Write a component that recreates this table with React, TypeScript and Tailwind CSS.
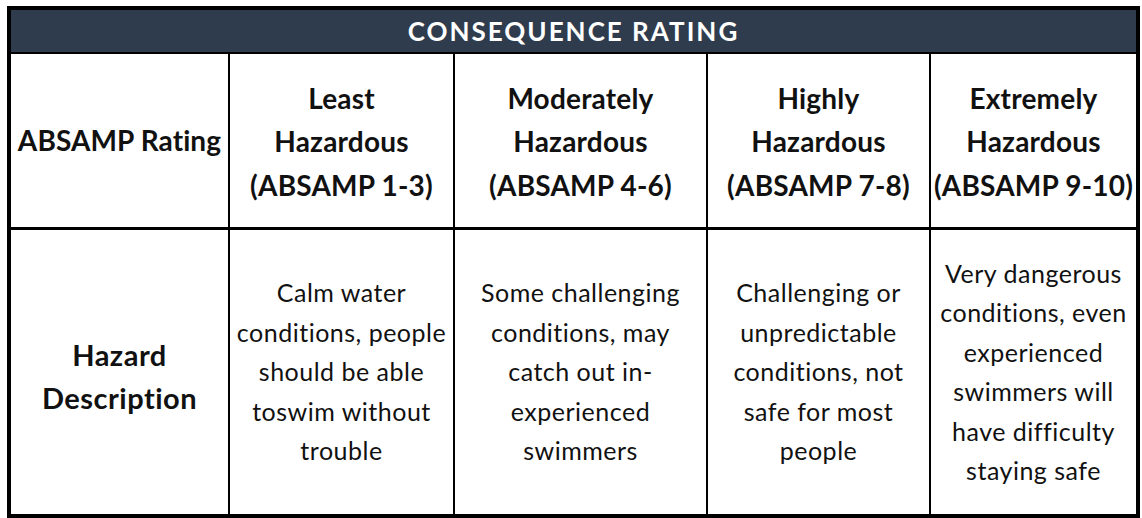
const levels = [
  { title: ["Least", "Hazardous", "(ABSAMP 1-3)"], desc: ["Calm water", "conditions, people", "should be able", "toswim without", "trouble"] },
  { title: ["Moderately", "Hazardous", "(ABSAMP 4-6)"], desc: ["Some challenging", "conditions, may", "catch out in-", "experienced", "swimmers"] },
  { title: ["Highly", "Hazardous", "(ABSAMP 7-8)"], desc: ["Challenging or", "unpredictable", "conditions, not", "safe for most", "people"] },
  { title: ["Extremely", "Hazardous", "(ABSAMP 9-10)"], desc: ["Very dangerous", "conditions, even", "experienced", "swimmers will", "have difficulty", "staying safe"] },
];

function Lines({ lines }: { lines: string[] }) {
  return (
    <div className="flex flex-col items-center">
      {lines.map((l) => (
        <span key={l} className="whitespace-nowrap">{l}</span>
      ))}
    </div>
  );
}

export default function App() {
  return (
    <div className="w-[1142px] h-[518px] bg-white pt-[6px] pl-[7px] font-['Lato',sans-serif] text-[#111]">
      <div className="w-[1133px] h-[512px] border-4 border-black flex flex-col">
        <div className="h-[44px] bg-[#2f3c4e] border-b-2 border-black flex items-center justify-center text-white font-bold text-[26px] tracking-[2px]">
          CONSEQUENCE RATING
        </div>

        <div className="grid grid-cols-[217px_223px_251px_221px_1fr] gap-x-[2px] bg-black h-[176px] border-b-[3px] border-black">
          <div className="bg-white flex items-center justify-center font-bold text-[28px] leading-[43px] tracking-[0.1px]">
            ABSAMP Rating
          </div>
          {levels.map((lv) => (
            <div key={lv.title[0]} className="bg-white flex items-center justify-center font-bold text-[28px] leading-[43.5px] pt-[3px] tracking-[0.2px]">
              <Lines lines={lv.title} />
            </div>
          ))}
        </div>

        <div className="grid grid-cols-[217px_223px_251px_221px_1fr] gap-x-[2px] bg-black flex-1">
          <div className="bg-white flex items-center justify-center font-bold text-[29px] leading-[43px] pt-[8px] tracking-[0.5px]">
            <Lines lines={["Hazard", "Description"]} />
          </div>
          {levels.map((lv) => (
            <div key={lv.title[0]} className="bg-white flex items-center justify-center text-[25px] leading-[39.5px] tracking-[0.5px]">
              <Lines lines={lv.desc} />
            </div>
          ))}
        </div>
      </div>
    </div>
  );
}
